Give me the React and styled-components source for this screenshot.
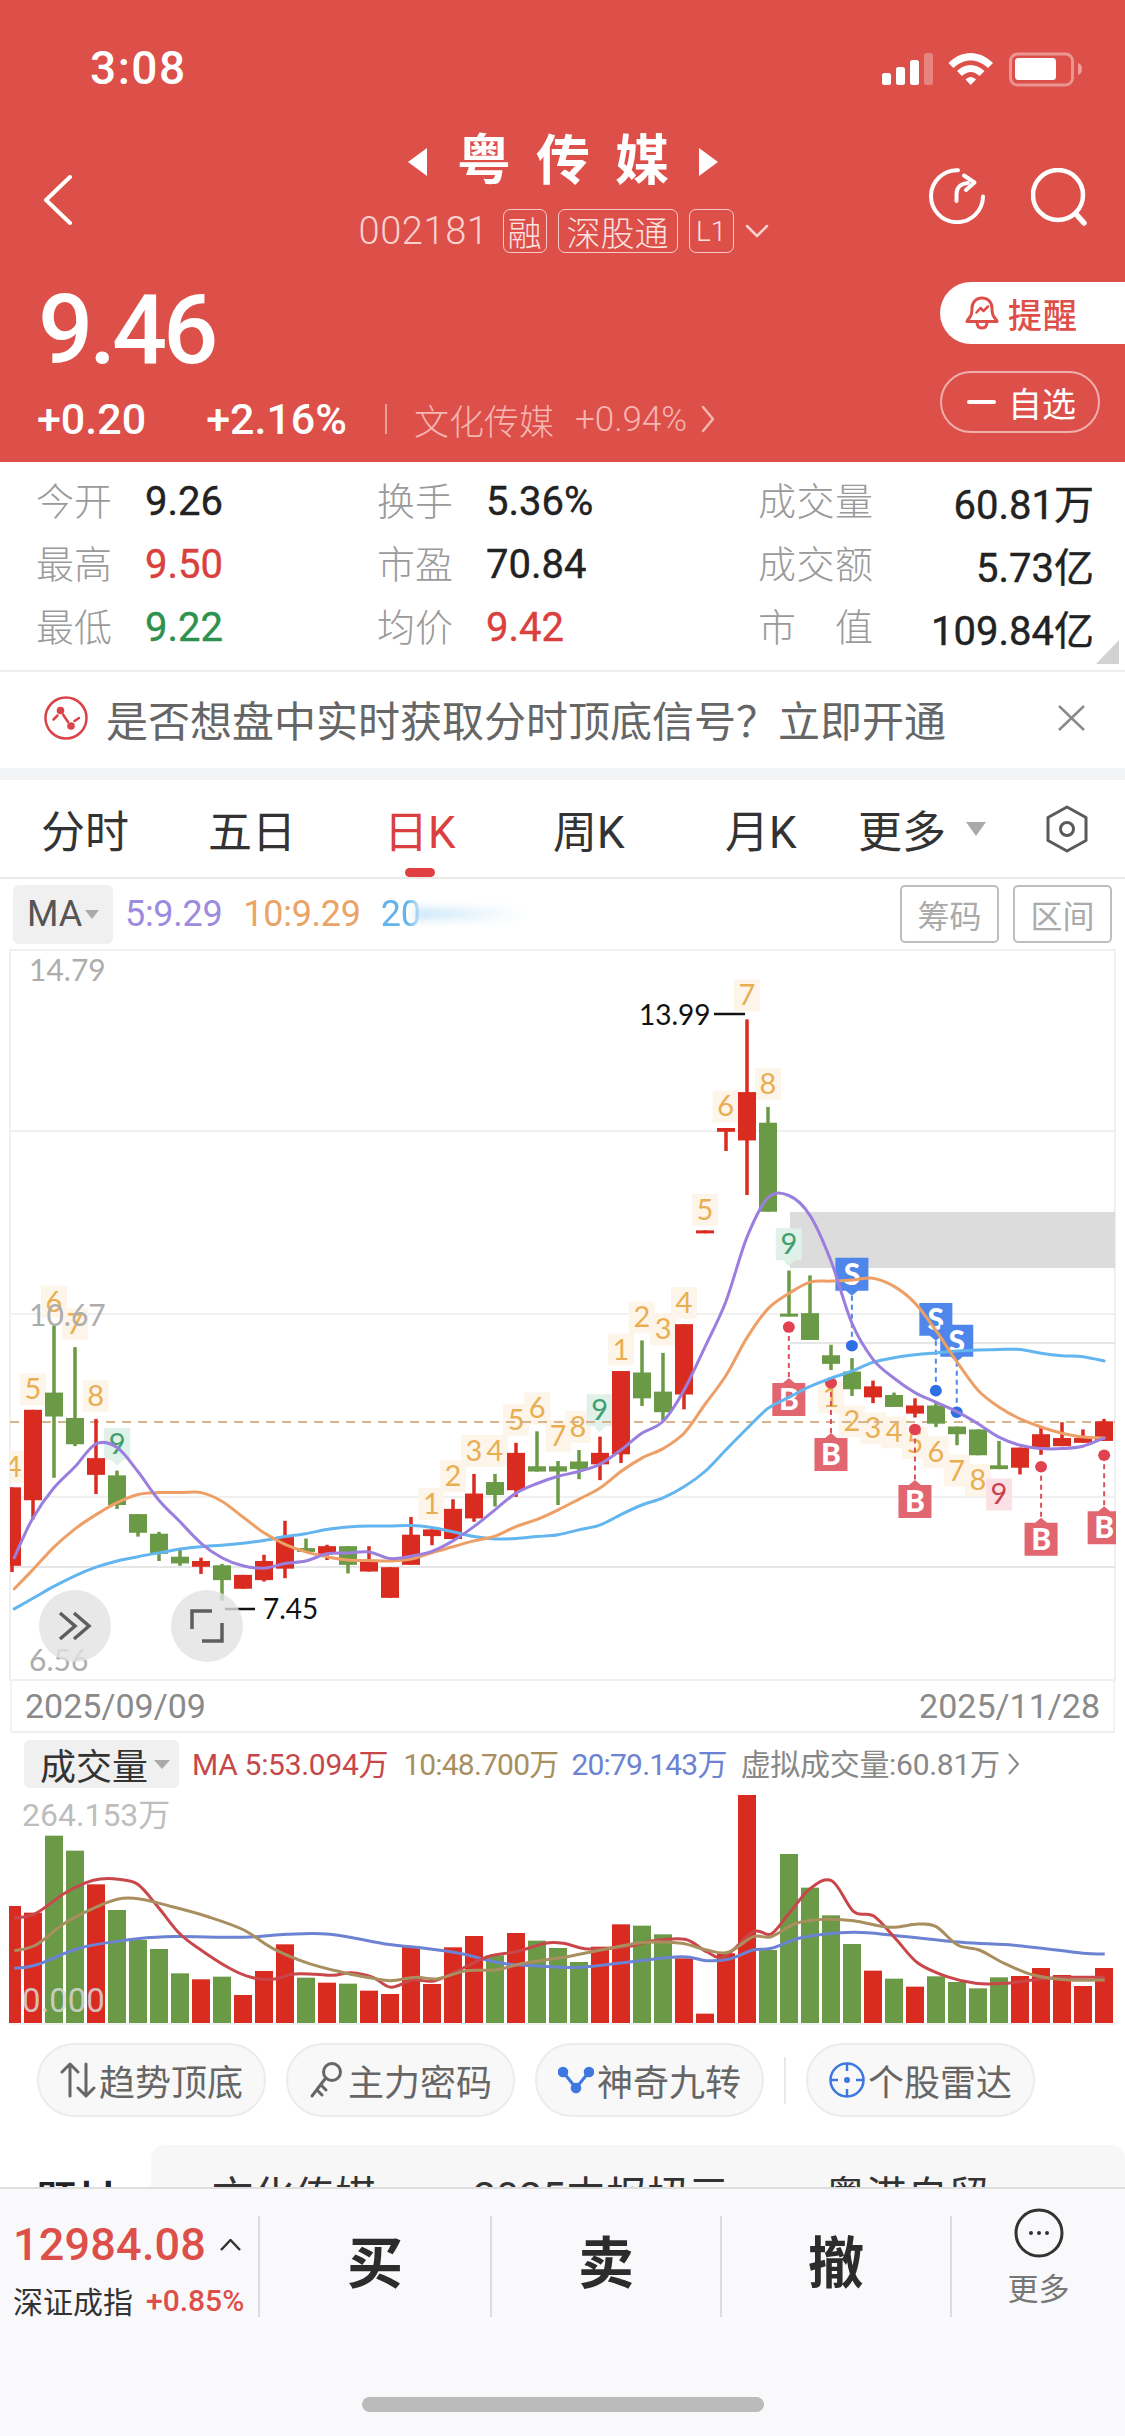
import React from "react";
import styled, { createGlobalStyle } from "styled-components";

const Global = createGlobalStyle`
  html, body { margin: 0; padding: 0; background: #fff; }
  body { font-family: Roboto, "Noto Sans CJK SC", sans-serif; }
`;

const RED = "#dd4f49";

const Page = styled.div`
  width: 1125px; height: 2436px; display: flex; flex-direction: column; overflow: hidden; background: #fff;
`;
const Main = styled.main`
  flex: 1; min-height: 0; overflow: hidden; display: flex; flex-direction: column;
`;
const Header = styled.header`
  flex: none; height: 462px; background: ${RED}; color: #fff; display: flex; flex-direction: column;
`;
const StatusBar = styled.div`
  height: 120px; box-sizing: border-box; padding: 40px 43px 0 90px; display: flex; justify-content: space-between; align-items: flex-start;
`;
const Time = styled.span`
  font-size: 46px; line-height: 56px; font-weight: 500; letter-spacing: 1.5px;
`;
const StatusIcons = styled.svg`
  margin-top: 12px; display: block;
`;
const NavRow = styled.div`
  height: 140px; display: grid; grid-template-columns: 1fr auto 1fr; padding: 0 38px 0 43px;
`;
const BackIcon = styled.svg`
  margin-top: 55px; display: block;
`;
const TitleBlock = styled.div`
  display: flex; flex-direction: column; align-items: center; padding-top: 12px;
`;
const TitleRow = styled.div`
  display: flex; align-items: center; gap: 30px; height: 60px; margin-left: -4px;
`;
const Title = styled.h1`
  margin: 0 -25px 0 0; font-size: 54px; line-height: 60px; font-weight: 700; letter-spacing: 25px;
`;
const Arrow = styled.span`
  width: 0; height: 0; border-top: 14px solid transparent; border-bottom: 14px solid transparent;
  ${p => p.$dir === "left" ? "border-right: 19px solid #fff;" : "border-left: 19px solid #fff;"}
`;
const SubRow = styled.div`
  display: flex; align-items: center; gap: 11px; margin-top: 17px; height: 44px; color: #f8d2cf; margin-left: -3px;
`;
const Code = styled.span`
  font-size: 38px; font-weight: 300; letter-spacing: 0.6px; margin-right: 3px;
`;
const Badge = styled.span`
  box-sizing: border-box; height: 44px; width: ${p => p.$w}px; display: flex; align-items: center; justify-content: center;
  border: 1.5px solid rgba(255,255,255,.7); border-radius: 7px; font-size: ${p => p.$small ? 28 : 34}px; font-weight: 300; color: #fbe3e1;
  white-space: nowrap;
`;
const NavIcons = styled.div`
  display: flex; justify-content: flex-end; gap: 46px; padding-top: 48px;
`;
const PriceArea = styled.div`
  flex: 1; display: flex; justify-content: space-between;
`;
const PriceLeft = styled.div`
  padding: 20px 0 0 38px;
`;
const Price = styled.div`
  font-size: 97px; line-height: 100px; font-weight: 500; letter-spacing: -4px;
`;
const ChangeRow = styled.div`
  display: flex; align-items: center; height: 44px; margin-top: 17px; margin-left: -1px;
`;
const Change = styled.span`
  font-size: ${p => p.$size}px; font-weight: 500; margin-right: ${p => p.$gap}px;
`;
const VBar = styled.span`
  width: 2px; height: 30px; background: rgba(255,255,255,.45); margin-right: 27px;
`;
const Sector = styled.span`
  font-size: 35px; font-weight: 300; color: #f5b6b2; margin-right: ${p => p.$gap}px;
`;
const PriceRight = styled.div`
  width: 185px; padding-top: 22px; display: flex; flex-direction: column; gap: 27px;
`;
const Remind = styled.div`
  height: 62px; border-radius: 31px 0 0 31px; background: #fff; color: ${RED}; display: flex; align-items: center; padding-left: 25px; gap: 9px;
  font-size: 34px; font-weight: 500; letter-spacing: 1px;
`;
const Fav = styled.div`
  box-sizing: border-box; width: 160px; height: 62px; border-radius: 31px; border: 2px solid rgba(255,255,255,.55); color: #fff;
  display: flex; align-items: center; padding-left: 25px; gap: 12px; font-size: 34px;
`;
const Minus = styled.span`
  width: 29px; height: 4px; background: #fff; border-radius: 2px;
`;

const Stats = styled.section`
  position: relative; flex: none; height: 210px; box-sizing: border-box; padding: 8px 0 0 36px;
  display: grid; grid-template-columns: 341px 381px 336px; grid-auto-rows: 63px;
  border-bottom: 2px solid #eeeeee;
  &::after { content: ""; position: absolute; right: 6px; bottom: 6px; width: 0; height: 0;
    border-left: 23px solid transparent; border-bottom: 24px solid #d2d2d2; }
`;
const Stat = styled.div`
  display: flex; align-items: center; justify-content: ${p => p.$wide ? "space-between" : "flex-start"};
`;
const StatLabel = styled.span`
  width: ${p => p.$wide ? 115 : 109}px; font-size: 38px; color: #9a9a9a; font-weight: 300; line-height: 46px;
  text-align-last: ${p => p.$wide ? "justify" : "left"}; white-space: nowrap;
`;
const StatValue = styled.span`
  font-size: 40px; font-weight: 400; color: ${p => p.$c || "#222"}; -webkit-text-stroke: .4px ${p => p.$c || "#222"};
`;
const Banner = styled.section`
  flex: none; height: 96px; display: flex; align-items: center; padding: 0 40px 4px 44px; box-sizing: border-box; color: #666;
`;
const BannerText = styled.span`
  font-size: 42px; margin-left: 18px; flex: 1; font-weight: 400; white-space: nowrap;
`;
const GapBand = styled.div`
  flex: none; height: 12px; background: #f2f3f5;
`;
const Tabs = styled.nav`
  flex: none; height: 99px; box-sizing: border-box; display: grid; padding-left: 41px;
  grid-template-columns: 167px 176px 169px 172px 133px 188px 1fr; align-items: center;
  border-bottom: 2px solid #e9e9e9;
`;
const Tab = styled.div`
  position: relative; height: 100%; display: flex; align-items: center; font-size: 44px;
  color: ${p => p.$active ? "#d9403e" : "#333"};
  ${p => p.$active && `&::after { content: ""; position: absolute; left: 21px; bottom: 0; width: 30px; height: 9px; border-radius: 5px; background: #e0403f; }`}
`;
const Tri = styled.span`
  display: inline-block; width: 0; height: 0; margin-left: ${p => p.$ml || 6}px;
  border-left: ${p => p.$s}px solid transparent; border-right: ${p => p.$s}px solid transparent; border-top: ${p => p.$h}px solid ${p => p.$c || "#aaa"};
`;
const MaRow = styled.div`
  flex: none; height: 70px; display: flex; align-items: center; padding: 0 13px; font-size: 36px;
`;
const MaBox = styled.div`
  width: 100px; height: 59px; background: #f0f0f0; border-radius: 6px; box-sizing: border-box; padding-left: 14px;
  display: flex; align-items: center; color: #555; font-size: 36px; margin-right: 12px;
`;
const MaValue = styled.span`
  color: ${p => p.$c}; margin-right: ${p => p.$gap}px; white-space: nowrap; letter-spacing: -.3px;
`;
const FadeWrap = styled.span`
  color: #63b4ea; white-space: nowrap;
  mask-image: linear-gradient(90deg, #000 26px, rgba(0,0,0,.25) 40px);
`;
const Streak = styled.span`
  width: 110px; height: 12px; margin-left: -6px; background: linear-gradient(90deg, rgba(99,180,234,.35), rgba(99,180,234,0));
  filter: blur(4px);
`;
const ToolGroup = styled.div`
  margin-left: auto; display: flex; gap: 14px;
`;
const ToolBtn = styled.div`
  width: 99px; height: 58px; box-sizing: border-box; border: 2px solid #bdbdbd; border-radius: 5px; color: #aaa;
  display: flex; align-items: center; justify-content: center; font-size: 32px;
`;
const ChartWrap = styled.div`
  position: relative; flex: none; height: 732px;
`;
const ChartSvg = styled.svg`
  display: block; flex: none;
`;
const FloatBtn = styled.div`
  position: absolute; left: ${p => p.$x}px; top: 641px; width: 72px; height: 72px; border-radius: 50%; background: rgba(226,226,226,.8);
  display: flex; align-items: center; justify-content: center;
`;
const DateRow = styled.div`
  flex: none; height: 52px; margin: 0 10px; padding: 0 13px; box-sizing: border-box; border-left: 2px solid #f3f3f3; border-right: 2px solid #f3f3f3;
  border-bottom: 2px solid #f0f0f0;
  display: flex; justify-content: space-between; align-items: center; font-size: 34px; color: #8a8a8a; font-weight: 400;
`;
const VolHead = styled.div`
  flex: none; height: 62px; display: flex; align-items: center; padding-left: 24px; font-size: 30px;
`;
const VolBox = styled.div`
  width: 155px; height: 48px; background: #f0f0f0; border-radius: 6px; box-sizing: border-box; padding-left: 16px; display: flex; align-items: center;
  font-size: 36px; color: #333; margin-right: 13px; white-space: nowrap;
`;
const VolValue = styled.span`
  color: ${p => p.$c}; margin: 0 ${p => p.$gap}px 4px 0; white-space: nowrap; letter-spacing: ${p => p.$ls}px;
`;
const Pills = styled.div`
  flex: none; padding: 13px 0 0 37px; display: flex; align-items: center; height: 74px; gap: 20px;
`;
const Pill = styled.div`
  box-sizing: border-box; width: 229px; height: 74px; border-radius: 37px; background: #f8f8f8; border: 2px solid #ececec;
  display: flex; align-items: center; justify-content: center; gap: 3px; font-size: 36px; color: #666; white-space: nowrap;
`;
const PillDiv = styled.span`
  width: 2px; height: 47px; background: #e8e8e8;
`;
const ConceptRow = styled.div`
  flex: none; margin-top: 28px; display: flex; height: 120px;
`;
const ConceptLabel = styled.div`
  width: 151px; box-sizing: border-box; padding: 37px 0 0 36px; font-size: 40px; line-height: 40px; font-weight: 700; color: #222;
`;
const ConceptCard = styled.div`
  flex: 1; background: #f7f7f7; border-radius: 14px 14px 0 0; display: grid; grid-template-columns: 261px 352px 1fr; padding: 32px 0 0 61px;
  font-size: 41px; line-height: 41px; color: #333; white-space: nowrap;
`;
const BottomBar = styled.footer`
  flex: none; height: 249px; box-sizing: border-box; background: #f9f9fb; border-top: 2px solid #dedede; display: flex; flex-direction: column;
`;
const BarRow = styled.div`
  margin-top: 27px; height: 90px; display: grid; grid-template-columns: 258px 232px 230px 230px 175px;
`;
const IndexCell = styled.div`
  padding: 6px 0 0 13px; white-space: nowrap;
`;
const IndexTop = styled.div`
  display: flex; align-items: center; font-size: 45px; line-height: 45px; font-weight: 500; color: ${RED}; letter-spacing: .2px;
`;
const IndexSub = styled.div`
  display: flex; align-items: center; margin-top: 16px; height: 34px; font-size: 30px; color: #333; gap: 13px;
`;
const IndexPct = styled.span`
  color: ${RED}; font-weight: 500;
`;
const TradeCell = styled.div`
  border-left: 2px solid #dcdcdc; display: flex; align-items: center; justify-content: center; font-size: 56px; font-weight: 700; color: #2c2c2c;
  padding-bottom: 17px;
`;
const MoreCell = styled.div`
  border-left: 2px solid #dcdcdc; display: flex; flex-direction: column; align-items: center; font-size: 31px; color: #777; line-height: 34px;
`;
const MoreIcon = styled.svg`
  margin-top: -8px; margin-bottom: 15px; display: block;
`;
const HomeBar = styled.div`
  margin: auto auto 24px; width: 402px; height: 15px; border-radius: 8px; background: #bbbbbb;
`;

/* ---------- chart data ---------- */
const cx = i => 12 + 21 * i;
const yM = Y => 950 + Y / 2.09;
const x3 = X => X / 2.8;
const x4 = X => 560 + X / 2.775;
const R = "#da2b20", G = "#6a9a45";

// [wickTop, bodyTop, bodyBottom, wickBottom, colour]
const candles = [
  [1123,1123,1287,1300,R],[961,961,1150,1190,R],[785,925,975,1103,G],[830,978,1033,1037,G],[980,1062,1097,1137,R],
  [1088,1098,1160,1168,G],[1179,1179,1218,1226,G],[1216,1220,1262,1277,G],[1250,1268,1282,1287,G],[1270,1277,1289,1304,R],
  [1283,1286,1317,1360,G],[1306,1306,1335,1335,R],[1264,1277,1317,1320,R],[1193,1227,1293,1313,R],[1230,1250,1258,1258,G],
  [1243,1246,1262,1275,R],[1246,1246,1285,1303,G],[1246,1275,1299,1299,R],[1290,1290,1354,1354,R],[1185,1222,1285,1285,R],
  [1211,1211,1225,1244,R],[1148,1168,1231,1231,R],[1095,1136,1188,1195,R],[1095,1112,1139,1163,G],[1030,1051,1129,1143,R],
  [1006,1079,1090,1090,G],[1068,1079,1090,1160,G],[1045,1069,1085,1106,G],[1017,1051,1075,1108,R],[880,880,1054,1072,R],
  [816,883,937,953,G],[842,923,966,985,G],[782,782,929,960,R],[586,586,592,592,R],[372,372,380,420,R],
  [145,297,398,512,R],[328,361,547,547,G],[670,760,766,766,G],[680,759,815,815,G],[825,847,865,878,G],
  [853,881,918,932,G],[900,912,935,947,R],[925,930,955,955,G],[937,952,969,977,R],[945,952,990,997,G],
  [996,996,1012,1035,G],[1002,1002,1056,1056,G],[1026,1077,1085,1085,G],[1040,1040,1082,1096,R],[997,1012,1040,1055,R],
  [987,1020,1037,1037,R],[1002,1020,1030,1030,R],[980,985,1026,1026,R],
];

const pts = (a3, a4) => [...a3.map(([x, y]) => [x3(x), yM(y)]), ...a4.map(([x, y]) => [x4(x), yM(y)])];
const ma5 = pts(
  [[40,1270],[90,1190],[150,1125],[210,1080],[269,1032],[328,1040],[386,1090],[445,1150],[504,1195],[563,1240],[621,1270],[680,1287],[739,1292],[798,1282],[856,1277],[915,1262],[974,1260],[1033,1258],[1092,1272],[1151,1267],[1209,1257],[1268,1235],[1327,1205],[1386,1170],[1445,1135],[1504,1115]],
  [[-5,1100],[52,1090],[110,1075],[169,1045],[227,1010],[286,985],[344,920],[402,830],[460,735],[519,600],[577,518],[635,513],[694,555],[752,650],[810,780],[868,855],[927,895],[985,925],[1043,945],[1101,965],[1160,990],[1218,1018],[1277,1035],[1335,1042],[1393,1042],[1451,1037],[1510,1020]]
);
const ma10 = pts(
  [[40,1335],[92,1295],[151,1248],[210,1210],[269,1180],[328,1155],[386,1138],[445,1134],[504,1134],[563,1134],[621,1152],[680,1185],[739,1218],[798,1242],[856,1258],[915,1268],[974,1275],[1033,1276],[1092,1277],[1151,1273],[1209,1260],[1268,1247],[1327,1235],[1386,1225],[1445,1205],[1504,1190]],
  [[-5,1170],[52,1148],[110,1125],[169,1090],[227,1062],[286,1042],[344,1010],[402,950],[460,890],[519,810],[577,750],[635,718],[694,694],[752,692],[810,690],[868,686],[927,703],[985,738],[1043,795],[1101,860],[1160,920],[1218,955],[1277,980],[1335,997],[1393,1010],[1451,1018],[1510,1020]]
);
const ma20 = pts(
  [[40,1377],[92,1355],[151,1330],[210,1308],[269,1290],[328,1277],[386,1268],[445,1260],[504,1252],[563,1247],[621,1244],[680,1240],[739,1234],[798,1226],[856,1220],[915,1211],[974,1206],[1033,1204],[1092,1204],[1151,1203],[1209,1207],[1268,1216],[1327,1226],[1386,1231],[1445,1230],[1504,1226]],
  [[-5,1222],[52,1212],[110,1202],[169,1180],[227,1160],[286,1145],[344,1122],[402,1090],[460,1045],[519,1000],[577,958],[635,935],[694,912],[752,895],[810,880],[868,862],[927,852],[985,846],[1043,842],[1101,838],[1160,836],[1218,835],[1277,835],[1335,843],[1393,848],[1451,850],[1510,859]]
);

const smooth = p => {
  let d = `M${p[0][0].toFixed(1)} ${p[0][1].toFixed(1)}`;
  for (let i = 0; i < p.length - 1; i++) {
    const a = p[i - 1] || p[i], b = p[i], c = p[i + 1], e = p[i + 2] || c;
    d += ` C${(b[0] + (c[0] - a[0]) / 6).toFixed(1)} ${(b[1] + (c[1] - a[1]) / 6).toFixed(1)} ${(c[0] - (e[0] - b[0]) / 6).toFixed(1)} ${(c[1] - (e[1] - b[1]) / 6).toFixed(1)} ${c[0].toFixed(1)} ${c[1].toFixed(1)}`;
  }
  return d;
};

// [x, Y, text, kind]
const tds = [
  [x3(37),1080,"4"],[x3(92),918,"5"],[x3(151),735,"6"],[x3(210),782,"7"],[x3(268),932,"8"],[x3(328),1032,"9","g"],
  [x3(1208),1158,"1"],[x3(1268),1100,"2"],[x3(1327),1047,"3"],[x3(1386),1047,"4"],[x3(1445),982,"5"],[x3(1504),958,"6"],
  [x4(-5),1015,"7"],[x4(50),997,"8"],[x4(110),962,"9","g"],[x4(169),835,"1"],[x4(227),768,"2"],[x4(286),793,"3"],[x4(344),738,"4"],
  [x4(402),543,"5"],[x4(460),327,"6"],[x4(519),95,"7"],[x4(577),280,"8"],[x4(635),615,"9","g"],
  [x4(752),935,"1"],[x4(810),985,"2"],[x4(868),1000,"3"],[x4(927),1008,"4"],[x4(985),1030,"5"],[x4(1043),1050,"6"],[x4(1101),1088,"7"],[x4(1160),1108,"8"],[x4(1218),1138,"9","p"],
];
const tdStyle = {
  o: { bg: "#fdf5ea", fg: "#e9ae52" },
  g: { bg: "#dff1e8", fg: "#3fa06f" },
  p: { bg: "#fbe1e4", fg: "#c8424e" },
};

// [x4, dotY, flagTopY]
const buys = [[635,788,905],[752,905,1020],[985,1002,1118],[1335,1080,1197],[1510,1056,1173]];
const sells = [[810,827,643,712],[1043,921,738,806],[1101,966,783,850]];

// volume: top in zoom space
const vols = [
  [618,R],[638,R],[407,G],[452,G],[553,R],[630,G],[720,G],[747,G],[820,G],[838,R],[830,G],[885,R],[813,R],[733,R],[833,G],[848,R],[851,G],[872,R],[882,R],[738,R],[852,R],[742,R],[708,R],[766,G],[699,R],[722,G],[744,G],[786,G],[740,R],[673,R],[677,G],[703,G],[775,R],[941,R],[760,R],[277,R],[750,G],[462,G],[563,G],[646,G],[732,G],[812,R],[836,G],[860,R],[829,G],[846,G],[865,G],[832,G],[828,R],[804,R],[825,R],[858,R],[804,R],
];
const vp = a => a.map(([x, y]) => [x / 1.394, 1700 + y / 3]);
const vRed = vp([[20,655],[50,640],[90,580],[120,548],[140,537],[165,538],[192,553],[220,620],[250,700],[280,750],[320,805],[350,832],[380,838],[410,822],[440,823],[465,826],[490,818],[520,832],[545,862],[575,840],[605,843],[640,810],[680,770],[720,755],[760,730],[785,730],[815,746],[850,745],[880,738],[910,722],[955,718],[985,755],[1010,770],[1050,695],[1075,702],[1100,640],[1130,565],[1160,543],[1190,635],[1218,648],[1250,720],[1280,790],[1320,830],[1360,850],[1400,850],[1440,840],[1480,832],[1540,832]]);
const vTan = vp([[20,752],[50,735],[90,670],[130,625],[165,597],[195,597],[240,620],[290,650],[340,690],[380,745],[430,790],[480,818],[520,835],[545,842],[580,832],[610,836],[650,812],[690,810],[730,790],[790,770],[850,745],[900,727],[950,730],[985,750],[1015,757],[1050,710],[1075,710],[1110,670],[1150,658],[1190,662],[1240,682],[1280,672],[1305,680],[1335,735],[1365,750],[1400,790],[1440,825],[1490,840],[1540,840]]);
const vBlue = vp([[20,805],[50,795],[110,745],[170,722],[230,710],[340,712],[400,703],[460,703],[540,733],[580,742],[640,760],[700,790],[750,798],[810,802],[880,785],[950,770],[985,782],[1015,778],[1050,750],[1075,745],[1120,712],[1190,697],[1250,707],[1340,727],[1420,737],[1510,760],[1540,762]]);

const LATO = "Lato, Roboto, sans-serif";

const MainChart = () => (
  <ChartSvg width="1125" height="732" viewBox="0 949 1125 732">
    <defs>
      <clipPath id="frame"><rect x="10" y="949" width="1106" height="732" /></clipPath>
    </defs>
    <g stroke="#f0f0f0" strokeWidth="2" fill="none">
      <path d="M10 950H1115M10 1131H1115M10 1314H1115M10 1497H1115M10 1680H1115M10 949V1681M1115 949V1681" />
      <path d="M10 1567H1115M790 1343H1115" stroke="#e6e6e6" />
    </g>
    <rect x="790" y="1212" width="325" height="56" fill="#dcdcdc" />
    <g clipPath="url(#frame)">
      {tds.map(([x, Y, t, k], i) => {
        const s = tdStyle[k || "o"], y = yM(Y);
        return (
          <g key={i}>
            <rect x={x - 13} y={y - 16} width="26" height="32" fill={s.bg} />
            {k === "g" && <path d={`M${x - 6} ${y + 16}L${x} ${y + 22}L${x + 6} ${y + 16}Z`} fill={s.bg} />}
            <text x={x} y={y + 10} textAnchor="middle" fontFamily={LATO} fontSize="29" fill={s.fg}>{t}</text>
          </g>
        );
      })}
      <path d="M10 1422H1115" stroke="#d8b48c" strokeWidth="2" strokeDasharray="9 7" />
      {candles.map(([wt, bt, bb, wb, c], i) => {
        const x = cx(i);
        return (
          <g key={i} fill={c}>
            {wb > wt && <rect x={x - 1.75} y={yM(wt)} width="3.5" height={(wb - wt) / 2.09} />}
            <rect x={x - 9} y={yM(bt)} width="18" height={Math.max(3, (bb - bt) / 2.09)} />
          </g>
        );
      })}
      {buys.map(([X, d, t], i) => {
        const x = x4(X), top = yM(t), dot = yM(d);
        return (
          <g key={i}>
            <path d={`M${x} ${dot}V${top - 5}`} stroke="#e0505c" strokeWidth="2" strokeDasharray="5 4" />
            <ellipse cx={x} cy={dot} rx="6" ry="5.8" fill="#e0434f" />
            <path d={`M${x - 16.5} ${top}H${x - 6}L${x} ${top - 5}L${x + 6} ${top}H${x + 16.5}V${top + 33}H${x - 16.5}Z`} fill="#e2666f" />
            <text x={x} y={top + 27} textAnchor="middle" fontFamily={LATO} fontWeight="900" fontSize="30" fill="#fff">B</text>
          </g>
        );
      })}
      {sells.map(([X, d, t, b], i) => {
        const x = x4(X), top = yM(t), bot = yM(b), dot = yM(d);
        return (
          <g key={i}>
            <path d={`M${x} ${bot + 5}V${dot}`} stroke="#4e86ec" strokeWidth="2" strokeDasharray="5 4" />
            <ellipse cx={x} cy={dot} rx="6" ry="5.8" fill="#2f6fe4" />
            <path d={`M${x - 16.5} ${top}H${x + 16.5}V${bot}H${x + 6}L${x} ${bot + 5}L${x - 6} ${bot}H${x - 16.5}Z`} fill="#4e86ec" />
            <text x={x} y={top + 27} textAnchor="middle" fontFamily={LATO} fontWeight="900" fontSize="30" fill="#fff">S</text>
          </g>
        );
      })}
      <g fill="none" strokeWidth="3" strokeLinejoin="round" strokeLinecap="round">
        <path d={smooth(ma20)} stroke="#62b5ee" />
        <path d={smooth(ma10)} stroke="#ee9f66" />
        <path d={smooth(ma5)} stroke="#9b7fde" />
      </g>
    </g>
    <g fontFamily={LATO} fontSize="30" fill="#adadad">
      <text x="29" y="981">14.79</text>
      <text x="29" y="1326">10.67</text>
      <text x="29" y="1671">6.56</text>
    </g>
    <g fontFamily={LATO} fontSize="28" fill="#111">
      <text x="639" y="1025">13.99</text>
      <path d="M714 1014H745" stroke="#111" strokeWidth="2.5" />
      <text x="263" y="1619">7.45</text>
      <path d="M225 1609H255" stroke="#111" strokeWidth="2.5" />
    </g>
  </ChartSvg>
);

const VolChart = () => (
  <ChartSvg width="1125" height="235" viewBox="0 1795 1125 235">
    <defs><clipPath id="vf"><rect x="9" y="1795" width="1106" height="235" /></clipPath></defs>
    <g clipPath="url(#vf)">
      {vols.map(([t, c], i) => {
        const y = 1700 + t / 3;
        return <rect key={i} x={cx(i) - 9} y={y} width="18" height={2023 - y} fill={c} />;
      })}
      <g fill="none" strokeWidth="3" strokeLinejoin="round">
        <path d={smooth(vBlue)} stroke="#6c82d2" />
        <path d={smooth(vRed)} stroke="#c9474a" />
        <path d={smooth(vTan)} stroke="#a98f5f" />
      </g>
    </g>
    <text x="22" y="1826" fontFamily="Roboto, 'Noto Sans CJK SC', sans-serif" fontSize="32" fill="#bdbdbd">264.153万</text>
    <text x="22" y="2012" fontFamily="Roboto, sans-serif" fontSize="33" fill="rgba(215,215,215,.85)">0.000</text>
    <path d="M10 2024H1115" stroke="#eee" strokeWidth="1.5" />
  </ChartSvg>
);

/* ---------- icons ---------- */
const StatusGlyphs = () => (
  <StatusIcons width="200" height="36" viewBox="882 52 200 36" fill="#fff">
    <rect x="882" y="73" width="9" height="12" rx="2.5" />
    <rect x="896" y="67" width="9" height="18" rx="2.5" />
    <rect x="910" y="60" width="9" height="25" rx="2.5" />
    <rect x="924" y="53" width="9" height="32" rx="2.5" opacity=".3" />
    <path d="M948.5 63C961 49.5 980 49.5 993 63L988 68C977.500 58 963.500 58 953.500 68Z" />
    <path d="M957 71C965 63 976 63 984.500 71L979.500 76C973.500 70.500 968 70.500 962 76Z" />
    <path d="M965.500 79.500C969 76 972.500 76 976 79.500L970.700 85Z" />
    <rect x="1010.500" y="54" width="62" height="31" rx="7" fill="none" stroke="#fff" strokeOpacity=".4" strokeWidth="3" />
    <rect x="1015" y="58" width="41" height="22" rx="3.500" />
    <path d="M1078 63C1081 64 1082 66 1082 69C1082 72 1081 74 1078 75Z" opacity=".45" />
  </StatusIcons>
);
const RefreshIcon = () => (
  <svg width="56" height="56" viewBox="0 0 56 56" fill="none" stroke="#fff" strokeWidth="4" strokeLinecap="round" strokeLinejoin="round">
    <path d="M29 2.200A26 26 0 1 0 54 28.500" />
    <path d="M27.500 33V26C27.500 19.500 32 15.500 39 15" />
    <path d="M35 7.500L45.500 14.500L37 22" />
  </svg>
);
const SearchIcon = () => (
  <svg width="56" height="58" viewBox="0 0 56 58" fill="none" stroke="#fff" strokeWidth="4.500" strokeLinecap="round">
    <circle cx="27" cy="27" r="25" />
    <path d="M45 46L53 55" strokeWidth="5.500" />
  </svg>
);
const BellIcon = () => (
  <svg width="34" height="34" viewBox="0 0 34 34" fill="none" stroke={RED} strokeWidth="3" strokeLinecap="round" strokeLinejoin="round">
    <path d="M5 21C7 18 7 15 7 12C7 6 11.500 2 17 2C22.500 2 27 6 27 12C27 15 27 18 29 21C30.500 23 32 24.500 32 25.500H2C2 24.500 3.500 23 5 21Z" />
    <path d="M12 26C12 30 14 32 17 32C20 32 22 30 22 26" />
    <path d="M11.500 16.500L15.500 12L18.500 15L23 10.500" strokeWidth="2.500" />
  </svg>
);
const SignalIcon = () => (
  <svg width="44" height="44" viewBox="0 0 44 44" fill="none" stroke="#d9434a" strokeWidth="2.500" strokeLinecap="round">
    <circle cx="22" cy="22" r="20.500" />
    <circle cx="16.500" cy="14.500" r="3.800" fill="#d9434a" stroke="none" />
    <circle cx="27" cy="30" r="3.800" fill="#d9434a" stroke="none" />
    <path d="M9.500 23.500L13.500 19.500M19 18.500L24 26M30.500 25L35 22" />
  </svg>
);
const CloseIcon = () => (
  <svg width="27" height="26" viewBox="0 0 27 26" stroke="#8a8a8a" strokeWidth="2.500" fill="none">
    <path d="M1 1L26 25M26 1L1 25" />
  </svg>
);
const GearIcon = () => (
  <svg width="42" height="48" viewBox="0 0 42 48" fill="none" stroke="#5a5a5a" strokeWidth="3" strokeLinejoin="round">
    <path d="M21 2L40 12.500V35.500L21 46L2 35.500V12.500Z" />
    <circle cx="21" cy="24" r="6.500" />
  </svg>
);
const UpDown = () => (
  <svg width="36" height="38" viewBox="0 0 36 38" fill="none" stroke="#666" strokeWidth="3" strokeLinecap="round" strokeLinejoin="round">
    <path d="M10 35V3M2 11L10 3L18 11" /><path d="M26 3V35M18 27L26 35L34 27" />
  </svg>
);
const KeyIcon = () => (
  <svg width="36" height="40" viewBox="0 0 36 40" fill="none" stroke="#666" strokeWidth="3" strokeLinecap="round">
    <circle cx="23" cy="12" r="8.500" />
    <path d="M16 19L3 36M8 30L13 35M12 25L17 30" />
  </svg>
);
const NineIcon = () => (
  <svg width="36" height="30" viewBox="0 0 36 30" fill="none" stroke="#3f77e0" strokeWidth="3">
    <path d="M5 7L18 23L31 7" />
    <circle cx="5" cy="7" r="3.800" fill="#3f77e0" /><circle cx="31" cy="7" r="3.800" fill="#3f77e0" /><circle cx="18" cy="23" r="3.800" fill="#3f77e0" />
  </svg>
);
const RadarIcon = () => (
  <svg width="36" height="36" viewBox="0 0 36 36" fill="none" stroke="#3f77e0" strokeWidth="2.500">
    <circle cx="18" cy="18" r="16.500" />
    <path d="M18 1.500V9M18 27V34.500M1.500 18H9M27 18H34.500" />
    <circle cx="18" cy="18" r="3" fill="#3f77e0" stroke="none" />
  </svg>
);

export default function App() {
  const stats = [
    [["今开", "9.26"], ["换手", "5.36%"], ["成交量", "60.81万", null, true]],
    [["最高", "9.50", "#d9403e"], ["市盈", "70.84"], ["成交额", "5.73亿", null, true]],
    [["最低", "9.22", "#2f9150"], ["均价", "9.42", "#d9403e"], ["市 值", "109.84亿", null, true]],
  ];
  return (
    <Page>
      <Global />
      <Main>
        <Header>
          <StatusBar>
            <Time>3:08</Time>
            <StatusGlyphs />
          </StatusBar>
          <NavRow>
            <BackIcon width="30" height="50" viewBox="0 0 30 50" fill="none" stroke="#fff" strokeWidth="4" strokeLinecap="round" strokeLinejoin="round">
              <path d="M27 2L3 25L27 48" />
            </BackIcon>
            <TitleBlock>
              <TitleRow>
                <Arrow $dir="left" />
                <Title>粤传媒</Title>
                <Arrow $dir="right" />
              </TitleRow>
              <SubRow>
                <Code>002181</Code>
                <Badge $w={44}>融</Badge>
                <Badge $w={120}>深股通</Badge>
                <Badge $w={45} $small>L1</Badge>
                <svg width="24" height="14" viewBox="0 0 24 14" fill="none" stroke="#f8d2cf" strokeWidth="2.500" strokeLinecap="round" strokeLinejoin="round"><path d="M2 2L12 12L22 2" /></svg>
              </SubRow>
            </TitleBlock>
            <NavIcons>
              <RefreshIcon />
              <SearchIcon />
            </NavIcons>
          </NavRow>
          <PriceArea>
            <PriceLeft>
              <Price>9.46</Price>
              <ChangeRow>
                <Change $size={43} $gap={60}>+0.20</Change>
                <Change $size={43} $gap={38}>+2.16%</Change>
                <VBar />
                <Sector $gap={21}>文化传媒</Sector>
                <Sector $gap={14}>+0.94%</Sector>
                <svg width="14" height="28" viewBox="0 0 14 28" fill="none" stroke="#f5b6b2" strokeWidth="2.500" strokeLinecap="round" strokeLinejoin="round"><path d="M2 2L12 14L2 26" /></svg>
              </ChangeRow>
            </PriceLeft>
            <PriceRight>
              <Remind><BellIcon />提醒</Remind>
              <Fav><Minus />自选</Fav>
            </PriceRight>
          </PriceArea>
        </Header>

        <Stats>
          {stats.flat().map(([l, v, c, wide]) => (
            <Stat key={l} $wide={wide}>
              <StatLabel $wide={wide}>{l}</StatLabel>
              <StatValue $c={c}>{v}</StatValue>
            </Stat>
          ))}
        </Stats>

        <Banner>
          <SignalIcon />
          <BannerText>是否想盘中实时获取分时顶底信号？立即开通</BannerText>
          <CloseIcon />
        </Banner>
        <GapBand />

        <Tabs>
          <Tab>分时</Tab>
          <Tab>五日</Tab>
          <Tab $active>日K</Tab>
          <Tab>周K</Tab>
          <Tab>月K</Tab>
          <Tab>更多<Tri $s={10} $h={14} $ml={20} /></Tab>
          <Tab><GearIcon /></Tab>
        </Tabs>

        <MaRow>
          <MaBox>MA<Tri $s={7} $h={9} $ml={3} $c="#aaa" /></MaBox>
          <MaValue $c="#9d8be0" $gap={21}>5:9.29</MaValue>
          <MaValue $c="#eaa467" $gap={20}>10:9.29</MaValue>
          <FadeWrap>20</FadeWrap>
          <Streak />
          <ToolGroup>
            <ToolBtn>筹码</ToolBtn>
            <ToolBtn>区间</ToolBtn>
          </ToolGroup>
        </MaRow>

        <ChartWrap>
          <MainChart />
          <FloatBtn $x={39}>
            <svg width="36" height="30" viewBox="0 0 36 30" fill="none" stroke="#5e5e5e" strokeWidth="3.500"><path d="M3 2L18 15L3 28M17 2L32 15L17 28" /></svg>
          </FloatBtn>
          <FloatBtn $x={171}>
            <svg width="34" height="34" viewBox="0 0 34 34" fill="none" stroke="#5e5e5e" strokeWidth="3.500"><path d="M2 20V2H22M32 14V32H12" /></svg>
          </FloatBtn>
        </ChartWrap>

        <DateRow>
          <span>2025/09/09</span>
          <span>2025/11/28</span>
        </DateRow>

        <VolHead>
          <VolBox>成交量<Tri $s={8} $h={9} $ml={6} /></VolBox>
          <VolValue $c="#c6474a" $gap={15} $ls={-0.3}>MA 5:53.094万</VolValue>
          <VolValue $c="#a98f5f" $gap={13} $ls={-0.8}>10:48.700万</VolValue>
          <VolValue $c="#6c82d2" $gap={14} $ls={-0.8}>20:79.143万</VolValue>
          <VolValue $c="#888" $gap={8} $ls={-0.3}>虚拟成交量:60.81万</VolValue>
          <svg width="11" height="22" viewBox="0 0 11 22" fill="none" stroke="#888" strokeWidth="2"><path d="M1 1L10 11L1 21" /></svg>
        </VolHead>

        <VolChart />

        <Pills>
          <Pill><UpDown />趋势顶底</Pill>
          <Pill><KeyIcon />主力密码</Pill>
          <Pill><NineIcon />神奇九转</Pill>
          <PillDiv />
          <Pill><RadarIcon />个股雷达</Pill>
        </Pills>

        <ConceptRow>
          <ConceptLabel>题材</ConceptLabel>
          <ConceptCard>
            <span>文化传媒</span>
            <span>2025中报扭亏</span>
            <span>粤港自贸</span>
          </ConceptCard>
        </ConceptRow>
      </Main>

      <BottomBar>
        <BarRow>
          <IndexCell>
            <IndexTop>
              12984.08
              <svg style={{ marginLeft: 14 }} width="21" height="12" viewBox="0 0 21 12" fill="none" stroke="#333" strokeWidth="2.500" strokeLinejoin="round"><path d="M1 11L10.500 1L20 11" /></svg>
            </IndexTop>
            <IndexSub>深证成指<IndexPct>+0.85%</IndexPct></IndexSub>
          </IndexCell>
          <TradeCell>买</TradeCell>
          <TradeCell>卖</TradeCell>
          <TradeCell>撤</TradeCell>
          <MoreCell>
            <MoreIcon width="50" height="50" viewBox="0 0 50 50" fill="none">
              <circle cx="25" cy="25" r="23" stroke="#333" strokeWidth="3" />
              <g fill="#333"><circle cx="17" cy="25" r="2" /><circle cx="25" cy="25" r="2" /><circle cx="33" cy="25" r="2" /></g>
            </MoreIcon>
            更多
          </MoreCell>
        </BarRow>
        <HomeBar />
      </BottomBar>
    </Page>
  );
}
